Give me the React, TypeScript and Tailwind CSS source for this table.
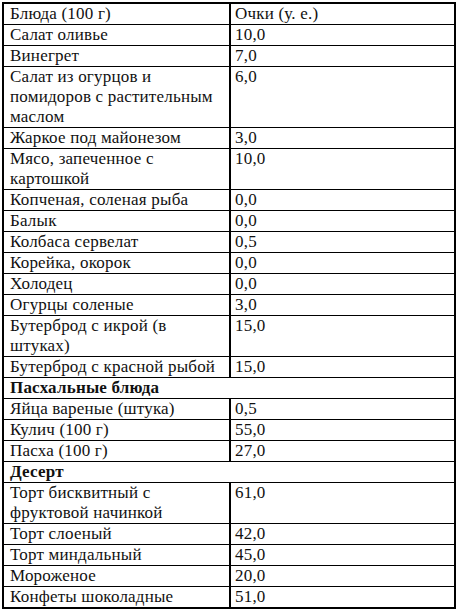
const rows: { name: string; value?: string; bold?: boolean }[] = [
  { name: 'Блюда (100 г)', value: 'Очки (у. е.)' },
  { name: 'Салат оливье', value: '10,0' },
  { name: 'Винегрет', value: '7,0' },
  { name: 'Салат из огурцов и помидоров с растительным маслом', value: '6,0' },
  { name: 'Жаркое под майонезом', value: '3,0' },
  { name: 'Мясо, запеченное с картошкой', value: '10,0' },
  { name: 'Копченая, соленая рыба', value: '0,0' },
  { name: 'Балык', value: '0,0' },
  { name: 'Колбаса сервелат', value: '0,5' },
  { name: 'Корейка, окорок', value: '0,0' },
  { name: 'Холодец', value: '0,0' },
  { name: 'Огурцы соленые', value: '3,0' },
  { name: 'Бутерброд с икрой (в штуках)', value: '15,0' },
  { name: 'Бутерброд с красной рыбой', value: '15,0' },
  { name: 'Пасхальные блюда', bold: true },
  { name: 'Яйца вареные (штука)', value: '0,5' },
  { name: 'Кулич (100 г)', value: '55,0' },
  { name: 'Пасха (100 г)', value: '27,0' },
  { name: 'Десерт', bold: true },
  { name: 'Торт бисквитный с фруктовой начинкой', value: '61,0' },
  { name: 'Торт слоеный', value: '42,0' },
  { name: 'Торт миндальный', value: '45,0' },
  { name: 'Мороженое', value: '20,0' },
  { name: 'Конфеты шоколадные', value: '51,0' },
];

export default function App() {
  return (
    <div className="w-[457px] h-[612px] bg-white pt-[2px] pl-[2px] font-[family-name:Liberation_Serif,serif] text-[17px] leading-[20px] tracking-[0.2px] text-[#111]">
      <div className="w-[454px] border-2 border-black">
        {rows.map((r, i) => (
          <div
            key={i}
            className={`flex ${i < rows.length - 1 ? 'border-b border-black' : ''}`}
          >
            {r.bold ? (
              <div className="flex-1 pl-[6px] pr-1 font-bold">{r.name}</div>
            ) : (
              <>
                <div className="w-[227px] shrink-0 pl-[6px] pr-1 border-r-2 border-black">{r.name}</div>
                <div className="flex-1 pl-[4px]">{r.value}</div>
              </>
            )}
          </div>
        ))}
      </div>
    </div>
  );
}
